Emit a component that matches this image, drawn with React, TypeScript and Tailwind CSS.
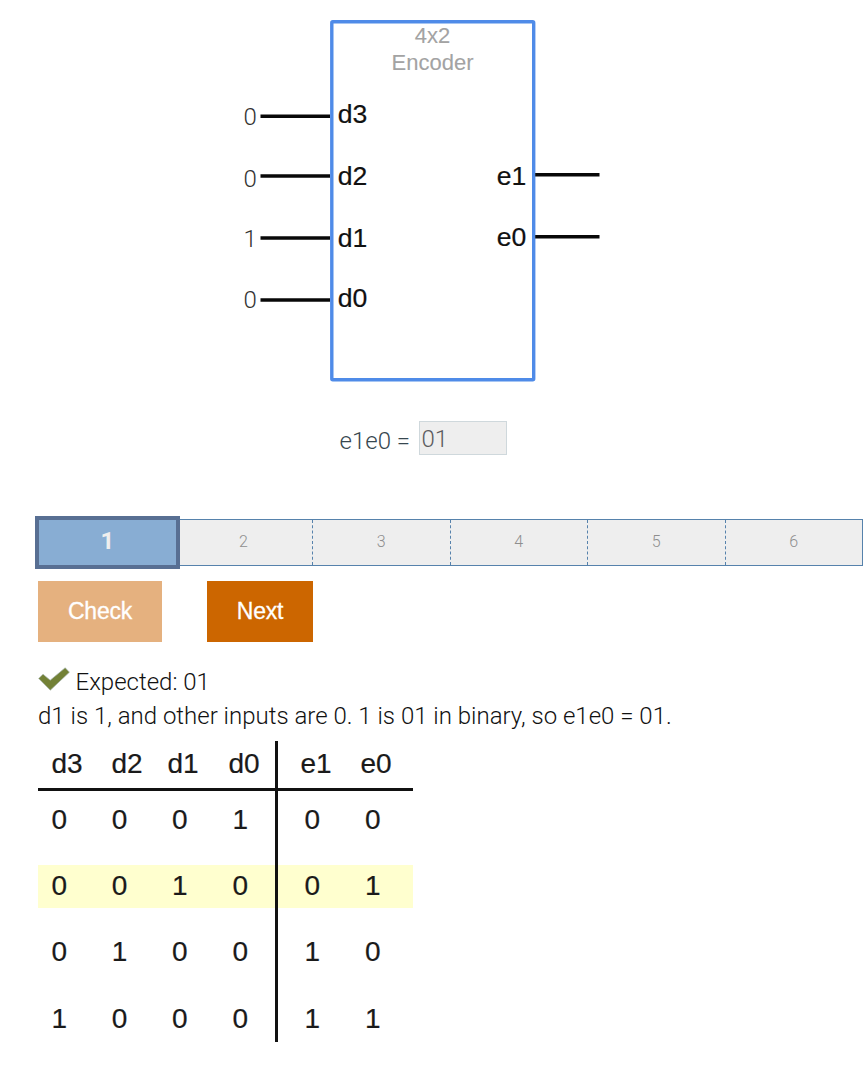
const inputs = [
  { name: 'd3', bit: '0', wireY: 116.3, labelY: 123.2, bitY: 124.5 },
  { name: 'd2', bit: '0', wireY: 176, labelY: 185.2, bitY: 186.5 },
  { name: 'd1', bit: '1', wireY: 238, labelY: 247, bitY: 246.5 },
  { name: 'd0', bit: '0', wireY: 300, labelY: 307.3, bitY: 307.5 },
];

const outputs = [
  { name: 'e1', wireY: 174.7, labelY: 185.3 },
  { name: 'e0', wireY: 236.7, labelY: 246.3 },
];

const levels = ['2', '3', '4', '5', '6'];

const rows = [
  { bits: ['0', '0', '0', '1', '0', '0'], active: false },
  { bits: ['0', '0', '1', '0', '0', '1'], active: true },
  { bits: ['0', '1', '0', '0', '1', '0'], active: false },
  { bits: ['1', '0', '0', '0', '1', '1'], active: false },
];

function EncoderDiagram() {
  return (
    <svg className="block h-[400px] w-[863px] shrink-0" viewBox="0 0 863 400">
      <rect x="331.8" y="21.8" width="201.9" height="358" rx="1" fill="none" stroke="#4f8be8" strokeWidth="3.4" />
      <g className="font-['Liberation_Sans',sans-serif]" fill="#a3a3a3" stroke="#a3a3a3" strokeWidth=".1" fontSize="22" textAnchor="middle">
        <text x="432.5" y="43">4x2</text>
        <text x="432.5" y="69.7">Encoder</text>
      </g>
      {inputs.map((p) => (
        <g key={p.name}>
          <line x1="260.5" x2="330" y1={p.wireY} y2={p.wireY} stroke="#080808" strokeWidth="3.4" />
          <text className="font-['Roboto',sans-serif] font-light" x="243.5" y={p.bitY} fontSize="24" fill="#333">{p.bit}</text>
          <text className="font-['Liberation_Sans',sans-serif]" x="337.8" y={p.labelY} fontSize="26.6" fill="#111" stroke="#111" strokeWidth=".2">{p.name}</text>
        </g>
      ))}
      {outputs.map((p) => (
        <g key={p.name}>
          <line x1="535.2" x2="599.5" y1={p.wireY} y2={p.wireY} stroke="#080808" strokeWidth="3.4" />
          <text className="font-['Liberation_Sans',sans-serif]" x="496.7" y={p.labelY} fontSize="26.6" fill="#111" stroke="#111" strokeWidth=".2">{p.name}</text>
        </g>
      ))}
    </svg>
  );
}

function TruthTable() {
  return (
    <div className="relative mt-[8px] ml-[38px] h-[301px] w-[375px] font-['Liberation_Sans',sans-serif] text-[28px] text-[#1a1a1a] [-webkit-text-stroke:0.2px_#1a1a1a]">
      <div className="flex h-[50px] border-b-[3px] border-[#111] pl-[13.5px] leading-[46px]">
        <span className="w-[60px]">d3</span>
        <span className="w-[56px]">d2</span>
        <span className="w-[61px]">d1</span>
        <span className="w-[72px]">d0</span>
        <span className="w-[60px]">e1</span>
        <span>e0</span>
      </div>
      <div className="flex flex-col gap-[23.4px] pt-[7.5px]">
        {rows.map((row) => (
          <div
            key={row.bits.join('')}
            className={`grid h-[43px] grid-cols-[60.3px_60.3px_60.3px_72.2px_60.3px_1fr] pl-[13.5px] leading-[42px] ${row.active ? 'bg-[#ffffcf]' : ''}`}
          >
            {row.bits.map((bit, i) => (
              <span key={i}>{bit}</span>
            ))}
          </div>
        ))}
      </div>
      <div className="absolute top-0 left-[237px] h-[301px] w-[3px] bg-[#111]" />
    </div>
  );
}

export default function App() {
  return (
    <main className="flex h-[1073px] w-[863px] flex-col overflow-hidden bg-white font-['Roboto',sans-serif] text-[24px] font-light text-[#111]">
      <EncoderDiagram />

      <div className="mt-[21px] flex h-[34px] items-start pl-[339.5px]">
        <label htmlFor="answer" className="w-[79.5px] pt-[3px] leading-[34px] text-[#37474f]">e1e0 =</label>
        <input
          id="answer"
          readOnly
          value="01"
          className="h-[34px] w-[88px] border border-[#cfd8dc] bg-[#eeeeee] pt-[2px] pl-[1.5px] text-[24px] font-light text-[#5c5c60] outline-none"
        />
      </div>

      <div className="mt-[61px] flex h-[53px] items-center pl-[35px]">
        <div className="flex h-[53px] w-[145px] shrink-0 items-center justify-center border-4 border-[#586f93] bg-[#88add3] pb-[3px] text-[24px] font-bold text-[#eeeeee]">1</div>
        <div className="-mt-px flex h-[47px] w-[683px] border-y border-r border-[#5682ac] bg-[#eeeeee] text-[16px] text-[#8e8e8e]">
          {levels.map((n, i) => (
            <div
              key={n}
              className={`flex items-center justify-center ${i === 0 ? 'w-[133px] pr-[5px]' : 'flex-1'} ${i < 4 ? 'border-r border-dashed border-[#5682ac]' : ''}`}
            >
              {n}
            </div>
          ))}
        </div>
      </div>

      <div className="mt-[12px] flex gap-[45px] pl-[38px] font-['Liberation_Sans',sans-serif] text-[23px] font-normal text-white [-webkit-text-stroke:0.3px_white]">
        <button className="h-[61px] w-[124px] bg-[#e5b17f] tracking-[-0.2px]">Check</button>
        <button className="h-[61px] w-[106px] bg-[#cc6600] tracking-[-0.2px]">Next</button>
      </div>

      <div className="mt-[23px] flex h-[34px] items-center pl-[38px] leading-[34px]">
        <svg className="mr-[5.5px] -mt-[6px] h-[24px] w-[32px]" viewBox="0 0 32 24">
          <path d="M.7 11.5 5 7.2l7.2 6L27.2.8l4.2 4.4L12.3 23.2Z" fill="#738136" stroke="#a5b3ab" strokeWidth=".7" />
        </svg>
        <span>Expected: 01</span>
      </div>
      <p className="pl-[38px] leading-[34px] whitespace-nowrap">d1 is 1, and other inputs are 0. 1 is 01 in binary, so e1e0 = 01.</p>

      <TruthTable />
    </main>
  );
}
